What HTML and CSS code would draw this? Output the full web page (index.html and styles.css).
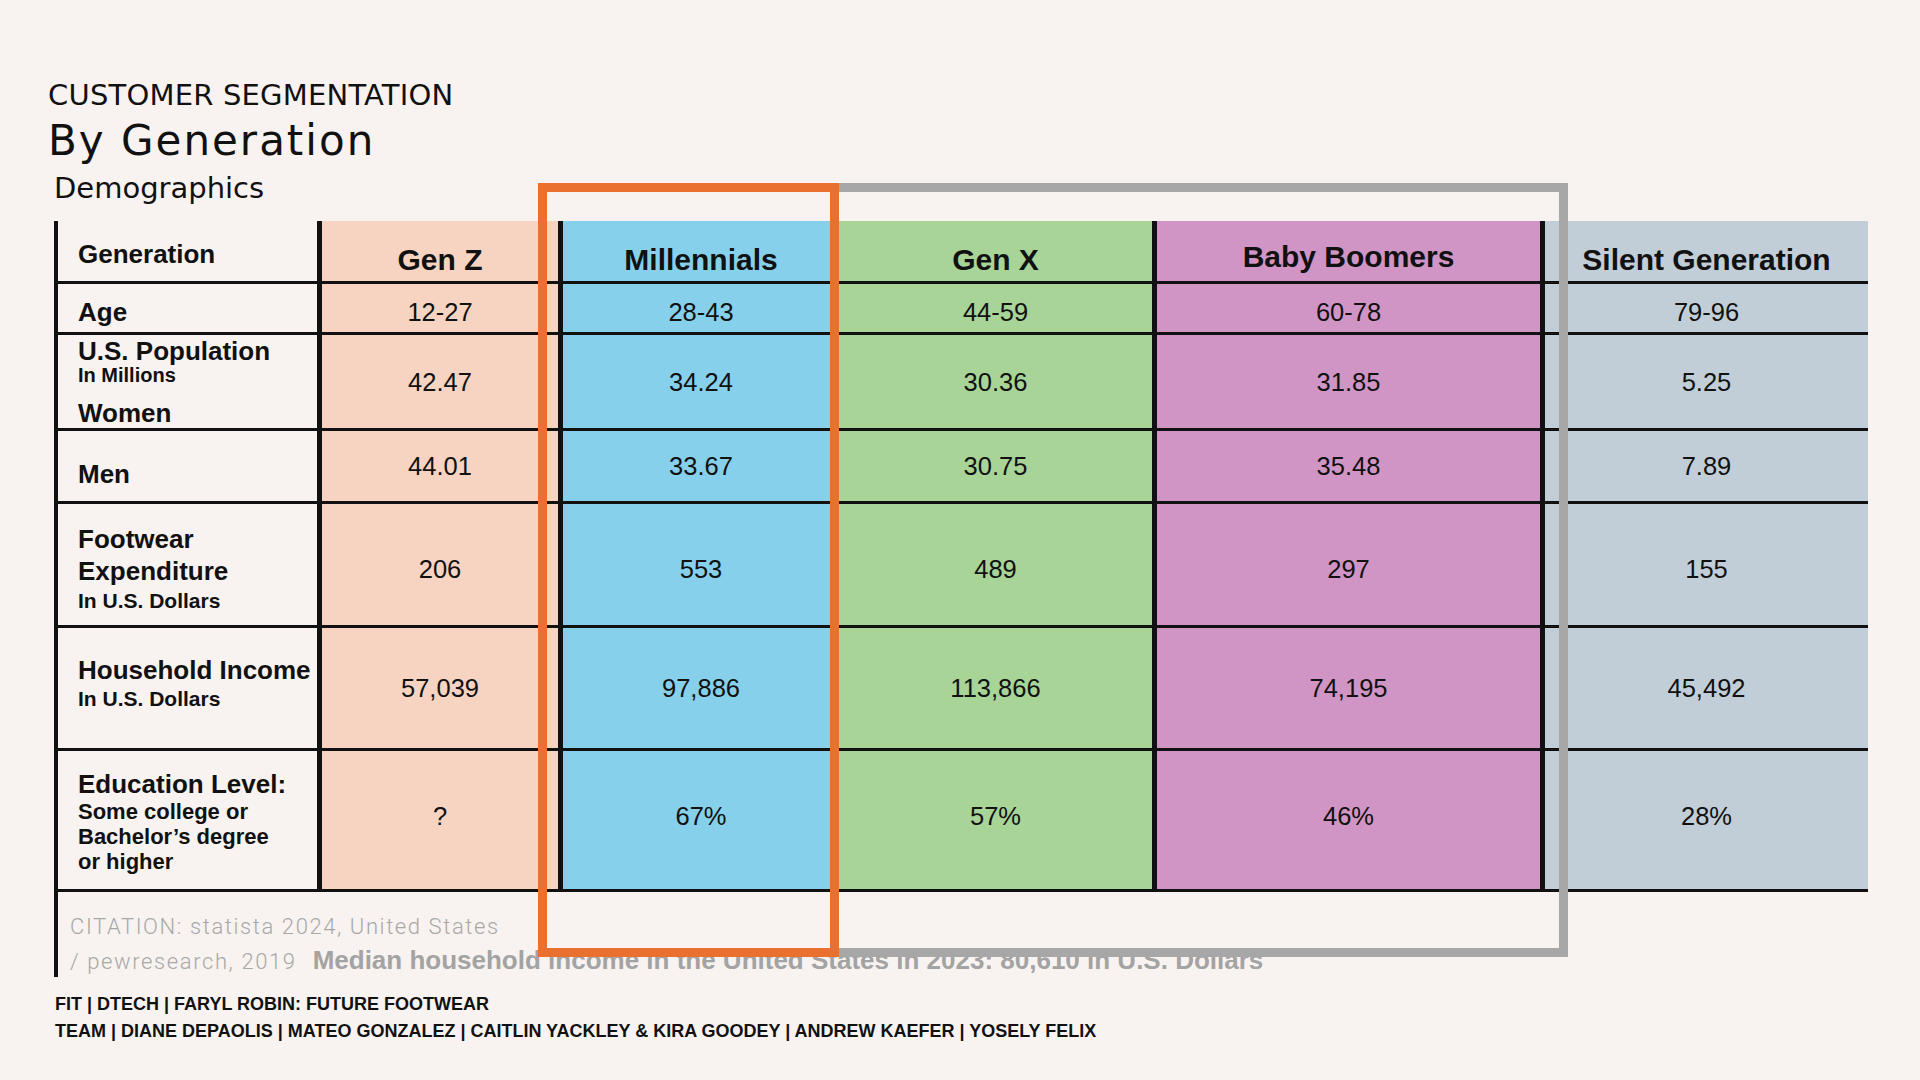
FILE: index.html
```html
<!DOCTYPE html>
<html lang="en">
<head>
<meta charset="utf-8">
<title>Customer Segmentation by Generation</title>
<link rel="stylesheet" href="styles.css">
</head>
<body>
<main class="slide">
  <header class="titles">
    <p class="kicker">CUSTOMER SEGMENTATION</p>
    <h1 class="title">By Generation</h1>
    <h2 class="subtitle">Demographics</h2>
  </header>

  <section class="data">
    <div class="table">
      <div class="cell label label-head">Generation</div>
      <div class="cell head genz">Gen Z</div>
      <div class="cell head mill">Millennials</div>
      <div class="cell head genx">Gen X</div>
      <div class="cell head boom boom-head">Baby Boomers</div>
      <div class="cell head silent">Silent Generation</div>

      <div class="cell label label-age">Age</div>
      <div class="cell val r-age genz">12-27</div>
      <div class="cell val r-age mill">28-43</div>
      <div class="cell val r-age genx">44-59</div>
      <div class="cell val r-age boom">60-78</div>
      <div class="cell val r-age silent">79-96</div>

      <div class="cell label label-pop">
        <span class="main">U.S. Population</span>
        <span class="sub-mil">In Millions</span>
        <span class="main women">Women</span>
      </div>
      <div class="cell val genz">42.47</div>
      <div class="cell val mill">34.24</div>
      <div class="cell val genx">30.36</div>
      <div class="cell val boom">31.85</div>
      <div class="cell val silent">5.25</div>

      <div class="cell label label-men">Men</div>
      <div class="cell val genz">44.01</div>
      <div class="cell val mill">33.67</div>
      <div class="cell val genx">30.75</div>
      <div class="cell val boom">35.48</div>
      <div class="cell val silent">7.89</div>

      <div class="cell label label-foot">
        <span class="main lh32">Footwear</span>
        <span class="main lh32">Expenditure</span>
        <span class="sub">In U.S. Dollars</span>
      </div>
      <div class="cell val r-foot genz">206</div>
      <div class="cell val r-foot mill">553</div>
      <div class="cell val r-foot genx">489</div>
      <div class="cell val r-foot boom">297</div>
      <div class="cell val r-foot silent">155</div>

      <div class="cell label label-income">
        <span class="main">Household Income</span>
        <span class="sub">In U.S. Dollars</span>
      </div>
      <div class="cell val genz">57,039</div>
      <div class="cell val mill">97,886</div>
      <div class="cell val genx">113,866</div>
      <div class="cell val boom">74,195</div>
      <div class="cell val silent">45,492</div>

      <div class="cell label label-edu">
        <span class="main">Education Level:</span>
        <span class="edu">Some college or</span>
        <span class="edu">Bachelor’s degree</span>
        <span class="edu">or higher</span>
      </div>
      <div class="cell val r-edu genz">?</div>
      <div class="cell val r-edu mill">67%</div>
      <div class="cell val r-edu genx">57%</div>
      <div class="cell val r-edu boom">46%</div>
      <div class="cell val r-edu silent">28%</div>
    </div>

    <div class="citation">
      <p class="cite-line first">CITATION: statista 2024, United States</p>
      <p class="cite-line second">/ pewresearch, 2019<span class="median">Median household income in the United States in 2023: 80,610 in U.S. Dollars</span></p>
    </div>
  </section>

  <footer class="credits">
    <p>FIT | DTECH | FARYL ROBIN: FUTURE FOOTWEAR</p>
    <p>TEAM | DIANE DEPAOLIS | MATEO GONZALEZ | CAITLIN YACKLEY &amp; KIRA GOODEY | ANDREW KAEFER | YOSELY FELIX</p>
  </footer>

  <div class="frame frame-gray"></div>
  <div class="frame frame-orange"></div>
</main>
</body>
</html>
```

FILE: styles.css
```css
* { box-sizing: border-box; }

body {
  margin: 0;
  background: #f8f3f0;
  color: #111;
}

.slide {
  position: relative;
  width: 1920px;
  height: 1080px;
  overflow: hidden;
}

/* Titles */
.titles {
  padding: 79px 0 0 48px;
  font-family: "DejaVu Sans", sans-serif;
}
.kicker {
  margin: 0;
  font-size: 29px;
  line-height: 32px;
  font-weight: normal;
  letter-spacing: 0.2px;
}
.title {
  margin: 6px 0 0;
  font-size: 42px;
  line-height: 48px;
  font-weight: normal;
  letter-spacing: 2px;
}
.subtitle {
  margin: 6px 0 0 6px;
  font-size: 29px;
  line-height: 34px;
  font-weight: normal;
}

/* Data section */
.data {
  margin: 16px 0 0 54px;
  width: 1814px;
  border-left: 4px solid #111;
}

.table {
  margin-top: 2px;
  display: grid;
  grid-template-columns: 259px 241px 281px 313px 388px 328px;
  grid-template-rows: 63px 51px 96px 73px 124px 123px 141px;
  font-family: "Liberation Sans", Arial, sans-serif;
}

.cell {
  border-bottom: 3px solid #111;
  display: flex;
  align-items: center;
  justify-content: center;
  color: #111;
}

.genz { background: #f6d4c1; border-left: 5px solid #111; }
.mill { background: #87d0eb; border-left: 5px solid #111; }
.genx { background: #a8d498; }
.boom { background: #d095c5; border-left: 5px solid #111; }
.silent { background: #c1ced7; border-left: 5px solid #111; }

.head {
  align-items: flex-end;
  padding-bottom: 4px;
  font-size: 30px;
  line-height: 34px;
  font-weight: bold;
}
.boom-head { padding-bottom: 7px; }

.val {
  font-size: 25.5px;
  line-height: 30px;
}
.r-age { padding-top: 7px; }
.r-foot { padding-top: 9px; }
.r-edu { padding-bottom: 9px; }

.label {
  flex-direction: column;
  align-items: flex-start;
  justify-content: center;
  padding-left: 20px;
  font-size: 26px;
  line-height: 30px;
  font-weight: bold;
}
.label span { display: block; }
.main { font-size: 26px; line-height: 30px; }
.lh32 { line-height: 32px; }
.sub { font-size: 21px; line-height: 27px; }
.sub-mil { font-size: 20px; line-height: 22px; margin-top: -2px; }
.edu { font-size: 22px; line-height: 25px; }

.label-head { padding-top: 5px; }
.label-age { padding-top: 7px; }
.label-pop { justify-content: flex-start; padding-top: 1px; }
.label-pop .women { margin-top: auto; }
.label-men { padding-top: 16px; }
.label-foot { padding-top: 8px; }
.label-income { padding-bottom: 10px; }
.label-edu { padding-top: 2px; }

/* Citation */
.citation {
  padding: 16px 0 0 12px;
  font-family: Roboto, "Liberation Sans", sans-serif;
  font-weight: 300;
  font-size: 22px;
  letter-spacing: 1.6px;
  color: #a8a8a8;
}
.cite-line { margin: 0; white-space: nowrap; }
.cite-line.first { line-height: 37px; }
.cite-line.second { line-height: 30px; }
.median {
  margin-left: 16px;
  font-family: "Liberation Sans", Arial, sans-serif;
  font-weight: bold;
  font-size: 26px;
  letter-spacing: 0;
  color: #a3a3a3;
}

/* Credits */
.credits {
  margin-top: 14px;
  padding-left: 55px;
  font-family: "Liberation Sans", Arial, sans-serif;
  font-weight: bold;
  font-size: 18px;
  line-height: 27px;
}
.credits p { margin: 0; white-space: nowrap; }

/* Highlight frames (annotation overlays) */
.frame {
  position: absolute;
  top: 183px;
  height: 774px;
  border: 9px solid;
  pointer-events: none;
}
.frame-gray {
  left: 830px;
  width: 738px;
  border-color: #a7a7a7;
  z-index: 1;
}
.frame-orange {
  left: 538px;
  width: 301px;
  border-color: #e9702f;
  z-index: 2;
}
```
